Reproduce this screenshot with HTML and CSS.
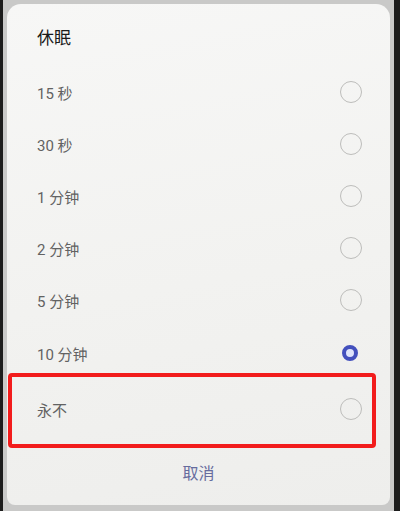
FILE: index.html
```html
<!DOCTYPE html>
<html lang="zh-CN">
<head>
<meta charset="utf-8">
<title>休眠</title>
<link rel="stylesheet" href="styles.css">
</head>
<body>
<div class="screen">
  <div class="dialog">
    <div class="title">休眠</div>
    <ul class="options">
      <li class="option"><span class="label">15 秒</span><span class="radio"></span></li>
      <li class="option"><span class="label">30 秒</span><span class="radio"></span></li>
      <li class="option"><span class="label">1 分钟</span><span class="radio"></span></li>
      <li class="option"><span class="label">2 分钟</span><span class="radio"></span></li>
      <li class="option"><span class="label">5 分钟</span><span class="radio"></span></li>
      <li class="option option-selected"><span class="label">10 分钟</span><span class="radio radio-on"></span></li>
      <li class="option option-last"><span class="label">永不</span><span class="radio"></span><span class="highlight"></span></li>
    </ul>
    <div class="cancel">取消</div>
  </div>
</div>
</body>
</html>
```

FILE: styles.css
```css
html, body {
  margin: 0;
  padding: 0;
  height: 511px;
  overflow: hidden;
  background: #1c1c1c;
}

.screen {
  margin: 0 6px 0 3px;
  height: 511px;
  box-sizing: border-box;
  padding: 4px 4px 0 4px;
  background: #c9c9c8;
  font-family: Roboto, "Noto Sans CJK SC", sans-serif;
}

.dialog {
  height: 501px;
  box-sizing: border-box;
  background: linear-gradient(170deg, #f7f7f6 0%, #f2f2f0 55%, #eeeeec 100%);
  border-radius: 14px 14px 8px 8px;
  display: flex;
  flex-direction: column;
}

.title {
  padding: 22px 0 16px 30px;
  font-size: 17px;
  line-height: 24px;
  font-weight: 400;
  color: #1a1a1a;
}

.options {
  list-style: none;
  margin: 0;
  padding: 0;
}

.option {
  position: relative;
  height: 52px;
  display: flex;
  align-items: center;
  justify-content: space-between;
  padding: 0 28px 0 30px;
}

.option-selected {
  height: 54px;
}

.option-last {
  height: 58px;
}

.label {
  font-size: 15px;
  color: #626262;
}

.radio {
  width: 22px;
  height: 22px;
  box-sizing: border-box;
  border: 1.3px solid #bdbdbb;
  border-radius: 50%;
}

.radio-on {
  width: 16px;
  height: 16px;
  margin-right: 4px;
  border: 4px solid #4350bd;
  background: #dfe4fb;
}

.highlight {
  position: absolute;
  left: 1px;
  right: 14px;
  top: -7px;
  bottom: -10px;
  border: 4px solid #f21c1c;
  border-radius: 4px;
}

.cancel {
  margin-top: 24px;
  text-align: center;
  font-size: 16px;
  line-height: 24px;
  color: #666c9e;
}
```
